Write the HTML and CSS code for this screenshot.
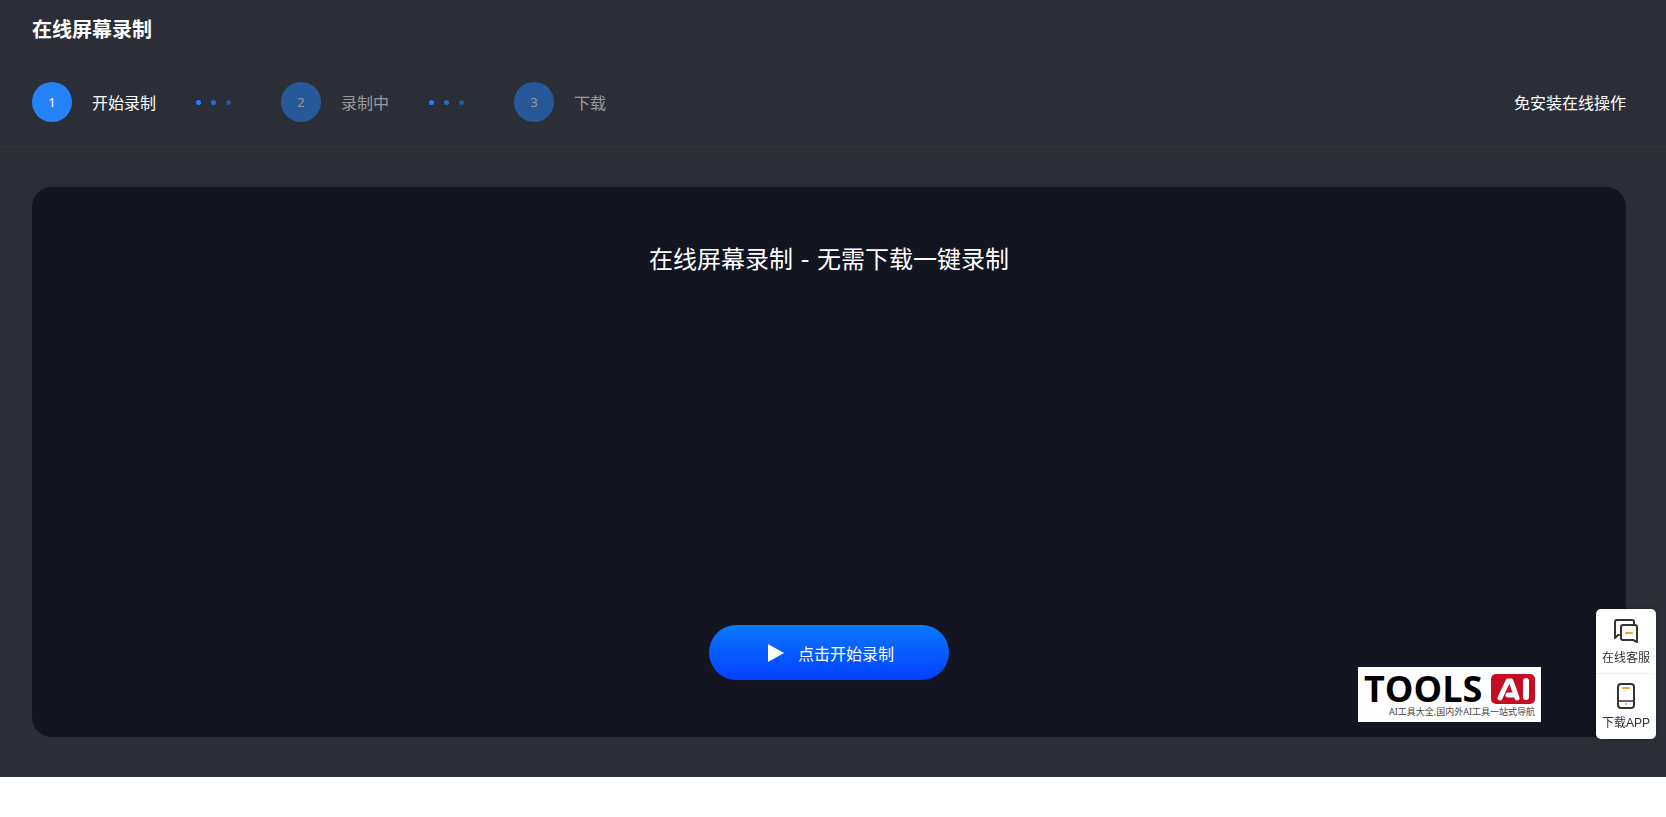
FILE: index.html
```html
<!DOCTYPE html>
<html lang="zh-CN">
<head>
    <meta charset="UTF-8">
    <meta name="viewport" content="width=device-width, initial-scale=1.0">
    <title>在线屏幕录制</title>
    <link rel="stylesheet" href="styles.css">
</head>
<body>
    <main class="recorder">
        <header class="header">
            <h1 class="header-title">在线屏幕录制</h1>
            <div class="header-row">
                <ol class="steps">
                    <li class="step active"><span class="step-num">1</span><span class="step-name">开始录制</span></li>
                    <li class="dots"><i></i><i></i><i></i></li>
                    <li class="step"><span class="step-num">2</span><span class="step-name">录制中</span></li>
                    <li class="dots"><i></i><i></i><i></i></li>
                    <li class="step"><span class="step-num">3</span><span class="step-name">下载</span></li>
                </ol>
                <p class="header-tip">免安装在线操作</p>
            </div>
        </header>

        <section class="panel">
            <h2 class="panel-title">在线屏幕录制 - 无需下载一键录制</h2>
            <button type="button" class="start-btn">
                <svg width="16" height="18" viewBox="0 0 16 18"><path d="M0 0L16 9L0 18Z" fill="#fff"/></svg>
                点击开始录制
            </button>
            <div class="watermark">
                <div class="wm-top">
                    <span class="wm-name">TOOLS</span>
                    <svg class="wm-ai" width="44" height="30" viewBox="0 0 44 30">
                        <rect width="44" height="30" rx="5" fill="#c40d23"/>
                        <path d="M9 24L17 7H20L26 24M17 21H22" fill="none" stroke="#fff" stroke-width="5" stroke-linejoin="round" stroke-linecap="round"/>
                        <path d="M35 7V23" stroke="#fff" stroke-width="6" stroke-linecap="round"/>
                    </svg>
                </div>
                <div class="wm-sub">AI工具大全,国内外AI工具一站式导航</div>
            </div>
        </section>
    </main>

    <!-- floating sidebar -->
    <nav class="float-bar">
        <a href="#" class="float-item">
            <svg width="26" height="26" viewBox="0 0 26 26" fill="none" stroke="#333" stroke-width="2" stroke-linejoin="round" stroke-linecap="round">
                <path d="M6 17H5L2 20V4Q2 2 4 2H19Q21 2 21 4V6"/>
                <path d="M10 7H22Q24 7 24 9V24L20 22H10Q8 22 8 20V9Q8 7 10 7Z"/>
                <path d="M13 15H19" stroke="#ffa01e"/>
            </svg>
            <span>在线客服</span>
        </a>
        <a href="#" class="float-item">
            <svg width="26" height="26" viewBox="0 0 26 26" fill="none" stroke="#333" stroke-width="2" stroke-linejoin="round" stroke-linecap="round">
                <rect x="5" y="1" width="16" height="24" rx="3"/>
                <path d="M5 18H21" stroke-width="1.5"/>
                <path d="M10 5H16" stroke="#ffa01e"/>
                <circle cx="13" cy="21" r="1" fill="#ffa01e" stroke="none"/>
            </svg>
            <span>下载APP</span>
        </a>
    </nav>
</body>
</html>
```

FILE: styles.css
```css
* { margin: 0; padding: 0; box-sizing: border-box; }
body { background: #fff; color: #fff; font-family: "Noto Sans", "Noto Sans CJK SC", sans-serif; font-size: 16px; }
ol { list-style: none; }
a { color: inherit; text-decoration: none; }

.recorder { background: #2c2e37; padding-bottom: 40px; }
.header { padding: 15px 40px 24px 32px; border-bottom: 1px solid #333335; }
.header-title { font-size: 20px; line-height: 30px; font-weight: bold; }
.header-row { display: flex; align-items: center; justify-content: space-between; margin-top: 37px; }
.header-tip, .step-name { line-height: 24px; padding-top: 2px; }

.steps { display: flex; align-items: center; }
.step { display: flex; align-items: center; gap: 20px; opacity: 0.5; }
.step.active { opacity: 1; }
.step-num { width: 40px; height: 40px; line-height: 40px; border-radius: 50%; background: #2483fb; text-align: center; font-size: 13px; }
.dots { display: flex; gap: 10px; margin: 0 50px 0 40px; }
.dots i { width: 5px; height: 5px; border-radius: 50%; background: #2483fb; }
.dots i:nth-child(2) { opacity: 0.75; }
.dots i:nth-child(3) { opacity: 0.5; }

.panel { position: relative; display: flex; flex-direction: column; align-items: center; justify-content: space-between; min-height: 550px; margin: 40px 40px 0 32px; padding: 55px 0 57px; border-radius: 20px; background: #131520; }
.panel-title { font-family: "DejaVu Sans", "Noto Sans CJK SC", sans-serif; font-size: 24px; line-height: 36px; font-weight: normal; }
.start-btn { display: flex; align-items: center; justify-content: center; gap: 14px; width: 240px; height: 55px; padding-left: 4px; border: 0; border-radius: 28px; background: linear-gradient(#0a78ff, #0340ff); color: #fff; font: inherit; cursor: pointer; }

.watermark { position: absolute; right: 85px; bottom: 15px; width: 183px; height: 55px; padding: 6px; background: #fff; color: #000; }
.wm-top { display: flex; align-items: center; justify-content: space-between; height: 32px; }
.wm-name { font-family: "Open Sans", sans-serif; font-size: 36px; line-height: 32px; font-weight: bold; }
.wm-sub { font-size: 9px; line-height: 14px; text-align: right; color: #444; white-space: nowrap; }

.float-bar { position: fixed; right: 10px; bottom: 78px; width: 60px; border-radius: 5px; background: #fff; color: #333; font-family: "Liberation Sans", "Noto Sans CJK SC", sans-serif; box-shadow: 0 0 5px rgba(0, 0, 0, 0.2); }
.float-item { display: flex; flex-direction: column; align-items: center; gap: 5px; height: 64px; padding-top: 9px; font-size: 12px; line-height: 18px; }
.float-item + .float-item { height: 66px; border-top: 1px solid #eee; }
```
